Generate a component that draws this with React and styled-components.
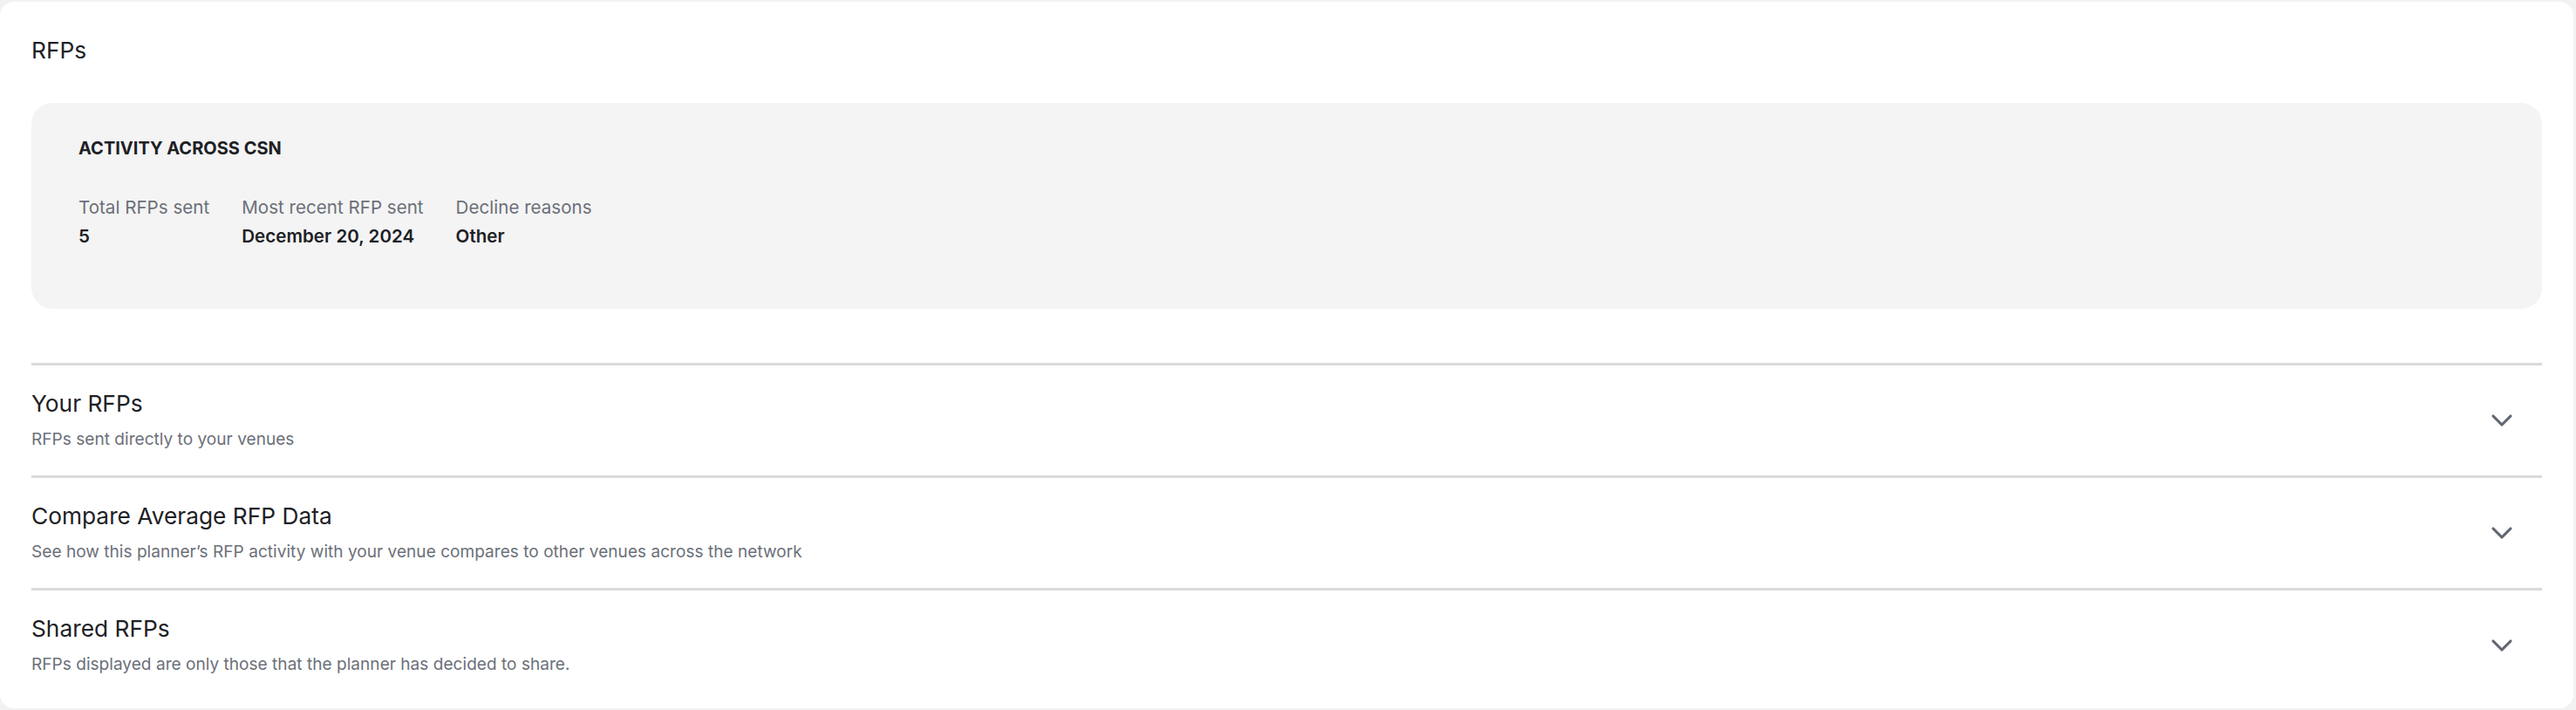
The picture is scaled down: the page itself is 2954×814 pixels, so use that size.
import React from "react";
import styled, { createGlobalStyle } from "styled-components";

const GlobalStyle = createGlobalStyle`
  html, body {
    margin: 0;
    padding: 0;
    background: #f2f2f2;
    font-family: Inter, "Noto Sans", sans-serif;
    -webkit-font-smoothing: antialiased;
  }
`;

const Page = styled.div`
  padding: 2px 3px 2px 0;
`;

const Card = styled.section`
  background: #ffffff;
  border-radius: 16px;
  padding: 40px 36px 6px;
  display: flex;
  flex-direction: column;
  height: 810px;
  box-sizing: border-box;
`;

const PageTitle = styled.h1`
  margin: 0;
  font-size: 26.3px;
  line-height: 32px;
  font-weight: 400;
  color: #1d2125;
`;

const ActivityBox = styled.div`
  margin-top: 44px;
  background: #f4f4f4;
  border-radius: 24px;
  padding: 40px 54px 0;
  height: 236px;
  box-sizing: border-box;
`;

const BoxHeading = styled.h2`
  margin: 0;
  font-size: 20px;
  line-height: 24px;
  font-weight: 700;
  color: #1d2125;
  text-transform: uppercase;
`;

const Stats = styled.div`
  margin-top: 40px;
  display: flex;
  gap: 37px;
`;

const Stat = styled.div`
  display: flex;
  flex-direction: column;
`;

const StatLabel = styled.span`
  font-size: 20.6px;
  line-height: 32.5px;
  color: #6b7079;
  white-space: nowrap;
`;

const StatValue = styled.span`
  font-size: 20.6px;
  line-height: 32.5px;
  font-weight: 600;
  color: #1d2125;
  white-space: nowrap;
`;

const Sections = styled.div`
  margin-top: 62px;
  display: flex;
  flex-direction: column;
`;

const SectionRow = styled.div`
  border-top: 3px solid #dadada;
  padding: 28px 0 28px;
  display: flex;
  align-items: center;
  justify-content: space-between;
  cursor: pointer;
`;

const SectionText = styled.div`
  display: flex;
  flex-direction: column;
  gap: 10px;
`;

const SectionTitle = styled.h3`
  margin: 0;
  font-size: 26.3px;
  line-height: 32px;
  font-weight: 400;
  color: #1d2125;
`;

const SectionSub = styled.p`
  margin: 0;
  font-size: 19.1px;
  line-height: 28px;
  color: #6b7079;
`;

const Chevron = styled.svg`
  width: 40px;
  height: 40px;
  margin-right: 26px;
  flex-shrink: 0;
  color: #5f6670;
`;

const ChevronDown = () => (
  <Chevron viewBox="0 0 24 24" fill="none" stroke="currentColor" strokeWidth="1.9" strokeLinecap="round" strokeLinejoin="round">
    <path d="M6 9l6 6 6-6" />
  </Chevron>
);

const stats = [
  { label: "Total RFPs sent", value: "5" },
  { label: "Most recent RFP sent", value: "December 20, 2024" },
  { label: "Decline reasons", value: "Other" },
];

const sections = [
  { title: "Your RFPs", sub: "RFPs sent directly to your venues" },
  {
    title: "Compare Average RFP Data",
    sub: "See how this planner\u2019s RFP activity with your venue compares to other venues across the network",
  },
  { title: "Shared RFPs", sub: "RFPs displayed are only those that the planner has decided to share." },
];

export default function App() {
  return (
    <>
      <GlobalStyle />
      <Page>
        <Card>
          <PageTitle>RFPs</PageTitle>
          <ActivityBox>
            <BoxHeading>Activity across CSN</BoxHeading>
            <Stats>
              {stats.map((s) => (
                <Stat key={s.label}>
                  <StatLabel>{s.label}</StatLabel>
                  <StatValue>{s.value}</StatValue>
                </Stat>
              ))}
            </Stats>
          </ActivityBox>
          <Sections>
            {sections.map((s) => (
              <SectionRow key={s.title}>
                <SectionText>
                  <SectionTitle>{s.title}</SectionTitle>
                  <SectionSub>{s.sub}</SectionSub>
                </SectionText>
                <ChevronDown />
              </SectionRow>
            ))}
          </Sections>
        </Card>
      </Page>
    </>
  );
}
